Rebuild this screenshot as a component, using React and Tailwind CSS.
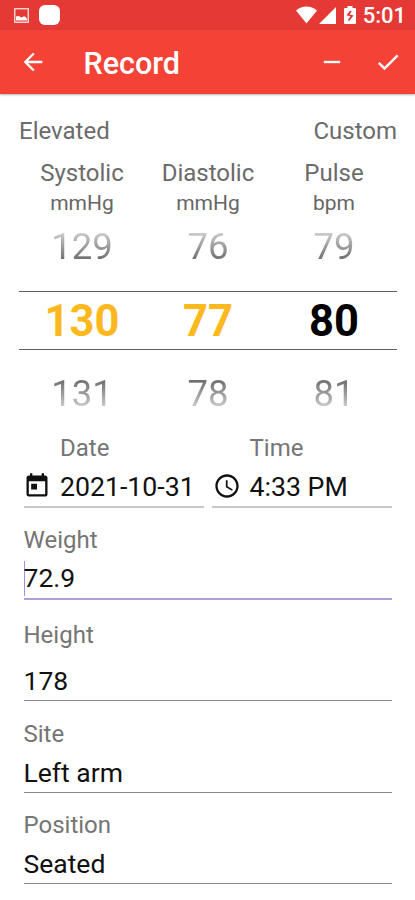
import { MdAccessTime, MdArrowBack, MdCheck, MdRemove, MdToday } from "react-icons/md";
import clsx from "clsx";

const readings = [
    { label: "Systolic", unit: "mmHg", prev: 129, value: 130, next: 131, color: "text-[#fbb91f]" },
    { label: "Diastolic", unit: "mmHg", prev: 76, value: 77, next: 78, color: "text-[#fbb91f]" },
    { label: "Pulse", unit: "bpm", prev: 79, value: 80, next: 81, color: "text-black" },
];

function StatusBar() {
    return (
        <div className="flex h-[30px] items-center justify-between bg-[#e53935] pl-[14px] pr-[9px] text-white">
            <div className="flex items-center gap-[10px]">
                <svg className="h-[15px] w-[15px]" viewBox="0 0 15 15" fill="none">
                    <rect x="0.75" y="0.75" width="13.5" height="13.5" stroke="#fde4e2" strokeWidth="1.3" />
                    <path d="M2 8.5 4.5 7.8 7 9.6 10.5 8.2 13 10.4V12.6H2Z" fill="#fff" />
                </svg>
                <div className="h-[20px] w-[21px] rounded-[6px] bg-white"></div>
            </div>
            <div className="flex items-center">
                <svg className="h-[18px] w-[21px]" viewBox="0 0 21 18" fill="currentColor">
                    <path d="M0 4.5C6-1 15-1 21 4.5L10.5 17.5Z" />
                </svg>
                <svg className="ml-[2px] h-[17px] w-[17px]" viewBox="0 0 17 17" fill="currentColor">
                    <path d="M0 17 17 0V17Z" />
                </svg>
                <svg className="ml-[8px] h-[18px] w-[12px]" viewBox="0 0 12 18">
                    <path d="M3.5 0h5v2H11q1 0 1 1v14q0 1-1 1H1q-1 0-1-1V3q0-1 1-1h2.5Z" fill="#fff" />
                    <path d="M7 5 4 8.8 8 10 4.5 14.5" fill="none" stroke="#d93532" strokeWidth="1.8" />
                </svg>
                <span className="ml-[7px] pt-[2px] text-[22px] font-medium leading-[28px]">5:01</span>
            </div>
        </div>
    );
}

function AppBar() {
    return (
        <div className="flex h-[64px] items-center bg-[#f44336] pl-[19px] pr-[13px] text-white shadow-[0_1px_2px_rgba(0,0,0,0.3)]">
            <MdArrowBack className="size-[28px]" />
            <h1 className="ml-[36.5px] flex-1 pt-[3px] text-[30.5px] font-medium leading-[36px]">Record</h1>
            <MdRemove className="mr-[28px] size-[28px]" />
            <MdCheck className="size-[28px]" />
        </div>
    );
}

function Field({ label, value, focused, className, valueClass }) {
    return (
        <div className={clsx("flex flex-col", className)}>
            <label className="-ml-[0.5px] text-[24px] leading-[28px] text-[#757575]">{label}</label>
            <div
                className={clsx(
                    "flex items-center border-b text-[26.5px] leading-[36px] text-[#111]",
                    focused ? "border-b-2 border-[#b39ddb]" : "border-[#8a8a8a]",
                    valueClass
                )}
            >
                {focused && <span className="-mr-px h-[35px] w-px bg-[#a58fd8]"></span>}
                <span className="-ml-[0.5px]">{value}</span>
            </div>
        </div>
    );
}

function PickerField({ label, value, icon: Icon, contentClass }) {
    return (
        <div className="w-[180px]">
            <div className={clsx("pl-[36px] text-[24px] leading-[28px] text-[#757575]", contentClass)}>{label}</div>
            <div className="h-[46px] border-b-2 border-[#c8c8c8]">
                <div className={clsx("flex h-full items-center pt-[3px]", contentClass)}>
                    <Icon className="-ml-px size-[28px] text-[#111]" />
                    <span className="ml-[9px] whitespace-nowrap pt-[3px] text-[26.7px] leading-[36px] text-[#111]">{value}</span>
                </div>
            </div>
        </div>
    );
}

export default function App() {
    return (
        <div className="h-[900px] w-[415px] overflow-hidden bg-white font-['Roboto',sans-serif]">
            <StatusBar />
            <AppBar />

            <div className="pl-[19px] pr-[18px] pt-[23px]">
                <div className="flex justify-between text-[24px] leading-[28px] text-[#6b6b6b]">
                    <span>Elevated</span>
                    <span>Custom</span>
                </div>

                {/* number pickers */}
                <div className="mt-[14px] grid grid-cols-3 text-center">
                    {readings.map((r) => (
                        <div key={r.label} className="flex flex-col items-center">
                            <div className="text-[24px] leading-[28px] text-[#6b6b6b]">{r.label}</div>
                            <div className="h-[30px] text-[21px] leading-[32px] text-[#666]">{r.unit}</div>
                            <div className="h-[58px] bg-linear-to-b from-[#d2d2d2] from-25% to-[#6c6c6c] to-75% bg-clip-text text-[36.5px] leading-[59px] text-transparent">
                                {r.prev}
                            </div>
                            <div
                                className={clsx(
                                    "mt-[16px] h-[59px] w-full border-y border-[#606060] text-[43.5px] font-bold leading-[59px]",
                                    r.color
                                )}
                            >
                                {r.value}
                            </div>
                            <div className="mt-[15px] h-[58px] bg-linear-to-b from-[#6c6c6c] from-25% to-[#d2d2d2] to-75% bg-clip-text text-[36.5px] leading-[57px] text-transparent">
                                {r.next}
                            </div>
                        </div>
                    ))}
                </div>
            </div>

            <div className="pl-[24px] pr-[23px] pt-[11px]">
                <div className="flex justify-between">
                    <PickerField label="Date" value="2021-10-31" icon={MdToday} />
                    <PickerField label="Time" value="4:33 PM" icon={MdAccessTime} contentClass="ml-[1.5px]" />
                </div>
                <Field label="Weight" value="72.9" focused className="mt-[18px]" valueClass="h-[46px] pt-[4px]" />
                <Field label="Height" value="178" className="mt-[21px]" valueClass="h-[52px] pt-[13px]" />
                <Field label="Site" value="Left arm" className="mt-[19px]" valueClass="h-[45px] pt-[5px]" />
                <Field label="Position" value="Seated" className="mt-[18px]" valueClass="h-[45px] pt-[5px]" />
            </div>
        </div>
    );
}
